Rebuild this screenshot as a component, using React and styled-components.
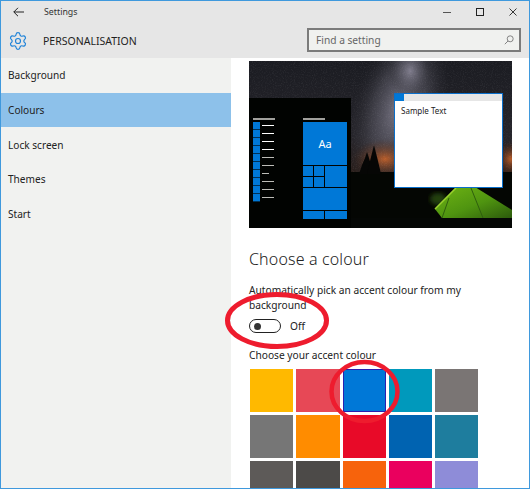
import React from 'react'
import styled, { createGlobalStyle } from 'styled-components'
import { Settings } from 'lucide-react'

const GlobalStyle = createGlobalStyle`
  html, body { margin: 0; padding: 0; background: #fff; overflow: hidden; }
  * { box-sizing: border-box; }
`

const Win = styled.div`
  position: relative;
  width: 530px;
  height: 489px;
  border: 1px solid #3f99dd;
  overflow: hidden;
  display: flex;
  flex-direction: column;
  background: #fff;
  font-family: "Noto Sans", "Open Sans", sans-serif;
  color: #1a1a1a;
`
const Header = styled.div`
  height: 57px;
  flex: none;
  background: #e6e6e6;
`
const TitleBar = styled.div`
  height: 22px;
  display: flex;
  align-items: center;
`
const BackBtn = styled.div`
  width: 36px;
  padding-left: 12px;
  display: flex;
`
const TitleText = styled.span`
  margin-left: 7px;
  font-size: 8.8px;
  color: #333;
`
const WinBtns = styled.div`
  margin-left: auto;
  display: flex;
  align-items: center;
  gap: 25px;
  padding-right: 12px;
`
const HeadRow = styled.div`
  height: 35px;
  display: flex;
  align-items: center;
  padding-left: 7px;
`
const PageTitle = styled.span`
  margin-left: 15px;
  font-size: 10.5px;
  color: #1f1f1f;
`
const Search = styled.div`
  margin-left: auto;
  margin-right: 8px;
  margin-top: -1px;
  width: 214px;
  height: 24px;
  border: 2px solid #7b7b7b;
  background: #f0f1ef;
  display: flex;
  align-items: center;
  justify-content: space-between;
  padding: 0 5px 0 7px;
  font-size: 10.2px;
  color: #666;
`
const Body = styled.div`
  flex: 1;
  display: flex;
  min-height: 0;
`
const Nav = styled.div`
  width: 230px;
  flex: none;
  background: #f1f2f0;
`
const NavItem = styled.div`
  height: 34.7px;
  display: flex;
  align-items: center;
  padding-left: 7px;
  font-size: 10.1px;
  color: #222;
  background: ${p => (p.$active ? '#8dc1ea' : 'transparent')};
`
const Content = styled.div`
  flex: 1;
  padding: 3px 0 0 18px;
  min-width: 0;
`
const Preview = styled.svg`
  display: block;
  width: 263px;
  height: 167px;
  font-family: "Noto Sans", sans-serif;
`
const Heading = styled.h2`
  margin: 20px 0 0;
  font-size: 16px;
  font-weight: 300;
  line-height: 22px;
  letter-spacing: 0.15px;
  color: #222;
`
const Para = styled.p`
  margin: 13px 0 0;
  width: 225px;
  font-size: 10.2px;
  line-height: 15px;
  color: #222;
`
const ToggleRow = styled.div`
  margin: 6px 0 0 0;
  display: flex;
  align-items: center;
  gap: 9px;
  font-size: 10.2px;
  height: 14px;
`
const Toggle = styled.span`
  width: 32px;
  height: 14px;
  border: 1.5px solid #222;
  border-radius: 7px;
  display: flex;
  align-items: center;
  padding-left: 4px;
`
const Knob = styled.span`
  width: 7px;
  height: 7px;
  border-radius: 50%;
  background: #333;
`
const SubLabel = styled.div`
  margin-top: 15px;
  font-size: 10.2px;
  line-height: 15px;
  color: #222;
`
const Swatches = styled.div`
  margin: 6px 0 0 1px;
  display: grid;
  grid-template-columns: repeat(5, 43.25px);
  grid-auto-rows: 43px;
  gap: 3px;
`
const Swatch = styled.div`
  background: ${p => p.$color};
  ${p => p.$selected && 'border: 1.5px solid #2a1fb0; box-shadow: 0 0 0 1px #fff;'}
`
const Rings = styled.svg`
  position: absolute;
  left: -1px;
  top: -1px;
  pointer-events: none;
`

const colours = [
  '#ffb900', '#e74856', '#0078d7', '#0099bc', '#7a7574',
  '#767676', '#ff8c00', '#e80a28', '#0063b1', '#1e7d9e',
  '#5d5a58', '#4c4a48', '#f7630c', '#ea005e', '#8e8cd8',
]

const lineWidths = [12, 12, 12, 12, 12, 12, 7, 12, 12, 12]

function StartPreview() {
  return (
    <Preview viewBox="0 0 263 167">
      <defs>
        <linearGradient id="sky" x1="0" y1="0" x2="0" y2="1">
          <stop offset="0" stopColor="#1b1c22" />
          <stop offset="0.45" stopColor="#25242a" />
          <stop offset="0.68" stopColor="#2a1e1a" />
        </linearGradient>
        <radialGradient id="milky" cx="0.5" cy="0.5" r="0.5">
          <stop offset="0" stopColor="#8a8798" stopOpacity="0.85" />
          <stop offset="0.55" stopColor="#55545f" stopOpacity="0.55" />
          <stop offset="1" stopColor="#2a2a30" stopOpacity="0" />
        </radialGradient>
        <radialGradient id="glow" cx="0.5" cy="0.5" r="0.5">
          <stop offset="0" stopColor="#c0602a" stopOpacity="0.95" />
          <stop offset="1" stopColor="#4a2615" stopOpacity="0" />
        </radialGradient>
        <linearGradient id="tent" x1="0" y1="0" x2="1" y2="1">
          <stop offset="0" stopColor="#6fb414" />
          <stop offset="0.55" stopColor="#4f9410" />
          <stop offset="1" stopColor="#2c5a0c" />
        </linearGradient>
        <filter id="soft"><feGaussianBlur stdDeviation="2" /></filter>
        <filter id="stars">
          <feTurbulence type="fractalNoise" baseFrequency="0.9" numOctaves="2" seed="4" />
          <feColorMatrix values="0 0 0 0 1  0 0 0 0 1  0 0 0 0 1  1.6 0 0 0 -0.75" />
        </filter>
      </defs>
      <rect width="263" height="167" fill="url(#sky)" />
      <ellipse cx="150" cy="48" rx="46" ry="90" fill="url(#milky)" transform="rotate(16 150 48)" />
      <ellipse cx="161" cy="10" rx="22" ry="28" fill="url(#milky)" />
      <ellipse cx="136" cy="98" rx="32" ry="20" fill="url(#glow)" />
      <ellipse cx="262" cy="98" rx="16" ry="18" fill="url(#glow)" />
      <rect width="263" height="112" filter="url(#stars)" opacity="0.1" />
      <rect y="111" width="263" height="56" fill="#040603" />
      <g fill="#060605">
        <path d="M110 113 L113 104 L116 97 L118 91 L120 97 L122 104 L125 113 Z" />
        <path d="M118 113 L121 100 L123 92 L125 84 L127 92 L129 100 L132 113 Z" />
      </g>
      <ellipse cx="189" cy="138" rx="8" ry="6" fill="#24400c" filter="url(#soft)" />
      <path d="M186 148 L207 126 L226 126 L263 149 L263 157 L193 157 Z" fill="url(#tent)" />
      <path d="M186 148 L207 127" stroke="#9ad02e" strokeWidth="1.6" fill="none" />
      <path d="M200 137 L193 157 M222 127 L234 157" stroke="#2f5f0e" strokeWidth="1" fill="none" />
      <rect y="157" width="263" height="10" fill="#050705" />

      <rect y="37" width="102" height="130" fill="#010301" />
      <rect x="4" y="57" width="22" height="2" fill="#a0a09c" />
      <rect x="54" y="57" width="22" height="2" fill="#a0a09c" />
      {lineWidths.map((w, i) => (
        <g key={i}>
          <rect x="4" y={61 + i * 8} width="7" height="7.4" fill="#0078d7" />
          <rect x="13" y={64 + i * 8} width={w} height="1" fill={i < 4 ? '#fff' : '#bdbdb8'} />
        </g>
      ))}
      <g fill="#0078d7">
        <rect x="54" y="61" width="44" height="43" />
        <rect x="54" y="105" width="10" height="10" />
        <rect x="65" y="105" width="10" height="10" />
        <rect x="54" y="116" width="10" height="10" />
        <rect x="65" y="116" width="10" height="10" />
        <rect x="76" y="105" width="22" height="21" />
        <rect x="54" y="127" width="44" height="22" />
        <rect x="54" y="150" width="21" height="8" />
        <rect x="76" y="150" width="22" height="8" />
      </g>
      <text x="76" y="87" fill="#fff" fontSize="11" textAnchor="middle">Aa</text>

      <rect x="145.5" y="32.5" width="108" height="94" fill="#fff" stroke="#0a6fcb" />
      <rect x="146" y="33" width="107" height="7" fill="#e6e6e6" />
      <rect x="146" y="33" width="9" height="7" fill="#0078d7" />
      <text x="152" y="53" fill="#222" fontSize="8">Sample Text</text>
    </Preview>
  )
}

export default function App() {
  return (
    <Win>
      <GlobalStyle />
      <Header>
        <TitleBar>
          <BackBtn>
            <svg width="11" height="10" viewBox="0 0 11 10" fill="none" stroke="#222" strokeWidth="1">
              <path d="M0.8 5H11M5 0.8L0.8 5L5 9.2" />
            </svg>
          </BackBtn>
          <TitleText>Settings</TitleText>
          <WinBtns>
            <svg width="8" height="8" viewBox="0 0 8 8"><path d="M0 4.5H8" stroke="#555" /></svg>
            <svg width="8" height="8" viewBox="0 0 8 8" fill="none"><rect x="0.5" y="0.5" width="7" height="7" stroke="#222" /></svg>
            <svg width="8" height="8" viewBox="0 0 8 8" fill="none"><path d="M0.5 0.5L7.5 7.5M7.5 0.5L0.5 7.5" stroke="#222" strokeWidth="0.9" /></svg>
          </WinBtns>
        </TitleBar>
        <HeadRow>
          <Settings size={20} color="#1f83d8" strokeWidth={1.4} />
          <PageTitle>PERSONALISATION</PageTitle>
          <Search>
            <span>Find a setting</span>
            <svg width="10" height="10" viewBox="0 0 10 10" fill="none" stroke="#777" strokeWidth="0.9">
              <circle cx="6.2" cy="3.8" r="3" />
              <path d="M4 6L0.8 9.2" />
            </svg>
          </Search>
        </HeadRow>
      </Header>
      <Body>
        <Nav>
          <NavItem>Background</NavItem>
          <NavItem $active>Colours</NavItem>
          <NavItem>Lock screen</NavItem>
          <NavItem>Themes</NavItem>
          <NavItem>Start</NavItem>
        </Nav>
        <Content>
          <StartPreview />
          <Heading>Choose a colour</Heading>
          <Para>Automatically pick an accent colour from my background</Para>
          <ToggleRow>
            <Toggle><Knob /></Toggle>
            <span>Off</span>
          </ToggleRow>
          <SubLabel>Choose your accent colour</SubLabel>
          <Swatches>
            {colours.map((c, i) => <Swatch key={c} $color={c} $selected={i === 2} />)}
          </Swatches>
        </Content>
      </Body>
      <Rings width="530" height="489" viewBox="0 0 530 489" fill="none" stroke="#ee1c2e">
        <ellipse cx="277" cy="320.5" rx="49.5" ry="26" strokeWidth="5" />
        <ellipse cx="364.5" cy="391.5" rx="33" ry="29.5" strokeWidth="4.5" />
      </Rings>
    </Win>
  )
}
